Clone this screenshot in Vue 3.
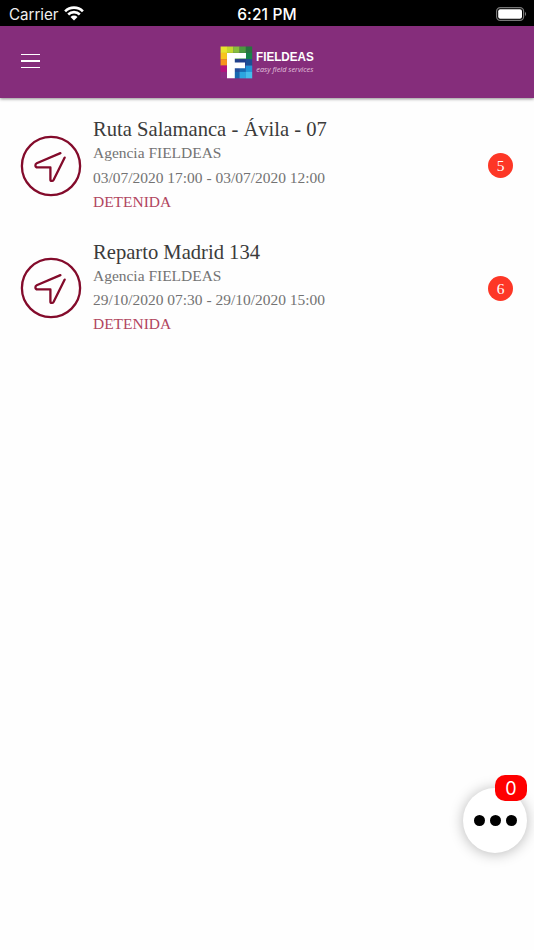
<template>
  <div class="screen">
    <div class="status-bar">
      <div class="carrier">
        <span>Carrier</span>
        <svg class="wifi" width="20" height="15" viewBox="0 0 20 15">
          <path d="M1.1 5.3A12.6 12.6 0 0 1 18.9 5.3M4.2 8.5A8.2 8.2 0 0 1 15.8 8.5" fill="none" stroke="#fff" stroke-width="2.6" />
          <path d="M6.5 10.9A5 5 0 0 1 13.5 10.9L10 14.5Z" fill="#fff" />
        </svg>
      </div>
      <div class="time">6:21 PM</div>
      <svg class="battery" width="32" height="14" viewBox="0 0 32 14">
        <rect x="0.6" y="0.6" width="27" height="12.8" rx="3.6" fill="none" stroke="#777" stroke-width="1.2" />
        <rect x="2.2" y="2.2" width="23.8" height="9.6" rx="2" fill="#fff" />
        <path d="M29 4.8Q31 7 29 9.2Z" fill="#888" />
      </svg>
    </div>

    <header class="header">
      <button class="menu" aria-label="Menu">
        <span></span>
        <span></span>
        <span></span>
      </button>
      <svg class="logo" width="120" height="34" viewBox="0 0 120 34">
        <rect
          v-for="(color, i) in logoColors"
          :key="i"
          :x="0.6 + (i % 5) * 6.3"
          :y="0.5 + Math.floor(i / 5) * 6.35"
          width="6.4"
          height="6.45"
          :fill="color"
        />
        <path d="M7 6.9H26V12.6H14.8V16.6H25V22.2H14.8V32.2H7Z" fill="#fff" />
        <text class="brand" x="36" y="15.4" textLength="57.8" lengthAdjust="spacingAndGlyphs">FIELDEAS</text>
        <text class="slogan" x="36.3" y="25.6" textLength="57" lengthAdjust="spacingAndGlyphs">easy field services</text>
      </svg>
    </header>

    <main class="list">
      <div v-for="route in routes" :key="route.name" class="route">
        <svg class="route-icon" width="62" height="62" viewBox="0 0 62 62">
          <circle cx="31" cy="31" r="29.1" />
          <path d="M40.4 18.1L16.7 28.3Q15.2 29 15.4 30.6Q15.6 32.4 17.4 32.4H30.4V44.4Q30.4 45.9 31.7 45.9H32.3Q33.3 45.9 33.8 44.6L44.7 22.6" />
        </svg>
        <div class="info">
          <div class="name">{{ route.name }}</div>
          <div class="text">{{ route.agency }}</div>
          <div class="text">{{ route.start }} - {{ route.end }}</div>
          <div class="text state">{{ route.state }}</div>
        </div>
        <span class="count">{{ route.count }}</span>
      </div>
    </main>

    <button class="fab">
      <i></i>
      <i></i>
      <i></i>
      <span class="fab-badge">{{ pending }}</span>
    </button>
  </div>
</template>

<script setup>
import { ref } from 'vue'

const pending = ref(0)

const routes = ref([
  {
    name: 'Ruta Salamanca - Ávila - 07',
    agency: 'Agencia FIELDEAS',
    start: '03/07/2020 17:00',
    end: '03/07/2020 12:00',
    state: 'DETENIDA',
    count: 5
  },
  {
    name: 'Reparto Madrid 134',
    agency: 'Agencia FIELDEAS',
    start: '29/10/2020 07:30',
    end: '29/10/2020 15:00',
    state: 'DETENIDA',
    count: 6
  }
])

const logoColors = [
  '#e8e52d', '#c3d82e', '#86bd3d', '#4b9a3f', '#28743f',
  '#f8c51c', '#8ec63f', '#4ba33d', '#2b8a45', '#17844b',
  '#f7941e', '#e9782b', '#20428c', '#1d3f8c', '#1a4f94',
  '#b5127d', '#7c2a86', '#234f9c', '#1769b0', '#2196d8',
  '#8d2c83', '#a0208a', '#1769b0', '#2ba6e0', '#45bdec'
]
</script>

<style>
body {
  margin: 0;
  background: #fefefe;
}
</style>

<style scoped>
.screen {
  height: 950px;
  overflow: hidden;
  position: relative;
  background: #fefefe;
  font-family: "Liberation Serif", "Times New Roman", serif;
}

.status-bar {
  display: grid;
  grid-template-columns: 1fr auto 1fr;
  align-items: center;
  height: 26px;
  padding: 0 6px 0 9px;
  box-sizing: border-box;
  background: #000;
  color: #fff;
  font: 16px/26px Inter, sans-serif;
}

.carrier {
  display: flex;
  align-items: center;
  gap: 6px;
  color: #eee;
}

.carrier span {
  font-size: 15.2px;
  letter-spacing: -0.05px;
  padding-top: 2px;
}

.wifi {
  margin-top: -1px;
}

.time {
  font-size: 15.5px;
  font-weight: 500;
  letter-spacing: 0.15px;
  padding-top: 2px;
  margin-right: 3px;
}

.battery {
  justify-self: end;
  margin-top: -1px;
}

.header {
  display: flex;
  align-items: center;
  height: 72px;
  padding-left: 21px;
  background: #852d7b;
  box-shadow: 0 1px 3px rgba(0, 0, 0, 0.45);
}

.menu {
  display: flex;
  flex-direction: column;
  gap: 5.2px;
  width: 19px;
  margin: -2px 0 0;
  padding: 0;
  border: none;
  background: none;
}

.menu span {
  height: 1.5px;
  background: #fff;
}

.logo {
  margin: 1px 0 0 180px;
  overflow: visible;
}

.brand {
  font: bold 12px "Liberation Sans", Arial, sans-serif;
  fill: #fff;
}

.slogan {
  font: italic 8px "Open Sans", sans-serif;
  fill: #e2c3de;
}

.list {
  padding-top: 6.5px;
}

.route {
  display: flex;
  align-items: center;
  height: 122.5px;
  padding: 0 21px 0 20px;
}

.route-icon {
  flex: none;
  fill: none;
  stroke: #830b2b;
  stroke-width: 2.3;
  stroke-linecap: round;
  stroke-linejoin: round;
}

.info {
  flex: 1;
  margin-left: 11px;
}

.name {
  font-size: 20.6px;
  line-height: 24px;
  color: #3b3b3b;
}

.text {
  font-size: 15.47px;
  line-height: 24.3px;
  color: #737373;
}

.text.state {
  color: #b1455f;
}

.count {
  width: 25px;
  height: 25px;
  border-radius: 50%;
  background: #fd3726;
  color: #fff;
  font-size: 15.5px;
  line-height: 25px;
  text-align: center;
}

.fab {
  position: absolute;
  left: 463px;
  top: 788px;
  display: flex;
  align-items: center;
  justify-content: center;
  gap: 5px;
  width: 64px;
  height: 65px;
  padding: 0;
  border: none;
  border-radius: 50%;
  background: #fff;
  box-shadow: 0 1px 14px rgba(0, 0, 0, 0.28);
}

.fab i {
  width: 11px;
  height: 11px;
  border-radius: 50%;
  background: #000;
}

.fab-badge {
  position: absolute;
  right: 0;
  top: -13px;
  width: 32px;
  height: 26px;
  border-radius: 10px;
  background: #fe0000;
  color: #fff;
  font: 18px/27px Inter, sans-serif;
  text-align: center;
}
</style>
